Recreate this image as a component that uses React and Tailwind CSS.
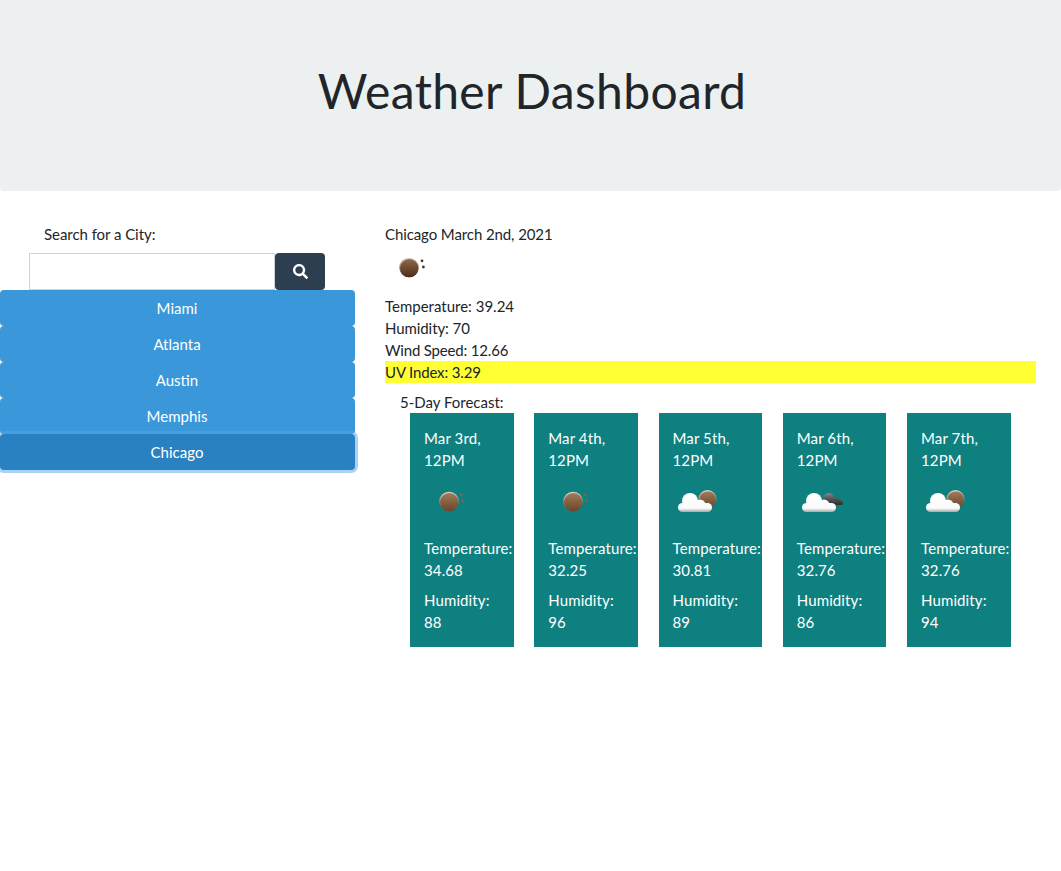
import React from 'react';
import { FaSearch } from 'react-icons/fa';

const cities = ['Miami', 'Atlanta', 'Austin', 'Memphis'];

const forecast = [
  { date: 'Mar 3rd,', temp: '34.68', humidity: '88', icon: 'ball' },
  { date: 'Mar 4th,', temp: '32.25', humidity: '96', icon: 'ball' },
  { date: 'Mar 5th,', temp: '30.81', humidity: '89', icon: 'cloudSun' },
  { date: 'Mar 6th,', temp: '32.76', humidity: '86', icon: 'cloudNight' },
  { date: 'Mar 7th,', temp: '32.76', humidity: '94', icon: 'cloudSun' },
];

// Shared gradients for the little weather drawings
const Defs = () => (
  <svg width="0" height="0" className="absolute">
    <defs>
      <linearGradient id="sun" x1="0" y1="0" x2="0" y2="1">
        <stop offset="0" stopColor="#a07a5c" />
        <stop offset="0.5" stopColor="#85603f" />
        <stop offset="1" stopColor="#694630" />
      </linearGradient>
      <linearGradient id="sunDark" x1="0" y1="0" x2="0" y2="1">
        <stop offset="0" stopColor="#8f6a4e" />
        <stop offset="0.5" stopColor="#6b4a30" />
        <stop offset="1" stopColor="#4a2e1c" />
      </linearGradient>
      <linearGradient id="rim" x1="0" y1="0" x2="0" y2="1">
        <stop offset="0" stopColor="#e2d3c4" />
        <stop offset="0.5" stopColor="#a58a74" />
        <stop offset="1" stopColor="#694630" />
      </linearGradient>
      <linearGradient id="cloud" gradientUnits="userSpaceOnUse" x1="0" y1="14" x2="0" y2="33">
        <stop offset="0" stopColor="#ffffff" />
        <stop offset="0.8" stopColor="#fbfbfb" />
        <stop offset="1" stopColor="#a8a8a8" />
      </linearGradient>
      <linearGradient id="night" x1="0" y1="0" x2="0" y2="1">
        <stop offset="0" stopColor="#8a8a8a" />
        <stop offset="0.4" stopColor="#5c5c5c" />
        <stop offset="1" stopColor="#2c2c2c" />
      </linearGradient>
    </defs>
  </svg>
);

const Cloud = () => (
  <g fill="url(#cloud)">
    <circle cx="17" cy="22" r="8" />
    <circle cx="27" cy="26" r="5.500" />
    <rect x="5" y="24" width="34" height="9" rx="4.500" />
  </g>
);

const Sun = ({ cx, cy, r, fill = 'url(#sun)' }) => (
  <>
    <circle cx={cx} cy={cy} r={r} fill="url(#rim)" />
    <circle cx={cx + 0.3} cy={cy + 0.7} r={r - 0.7} fill={fill} />
  </>
);

const WeatherIcon = ({ type, dark }) => (
  <svg width="50" height="50" viewBox="0 0 50 50" className="block">
    {type === 'ball' && (
      <>
        <Sun cx={dark ? 24 : 25} cy={22.5} r={9.8} fill={dark ? 'url(#sunDark)' : 'url(#sun)'} />
        <circle cx="37" cy="15.800" r="1.400" fill={dark ? '#4a3426' : '#8a5f45'} />
        <circle cx="38.400" cy="22" r="1.400" fill={dark ? '#4a3426' : '#8a5f45'} />
      </>
    )}
    {type === 'cloudSun' && (
      <>
        <Sun cx={34.5} cy={20} r={9} />
        <Cloud />
      </>
    )}
    {type === 'cloudNight' && (
      <>
        <path
          d="M26 20C26 16 29 14 32 14C34.500 14 36 16 37 18.500C41 19 46 21.500 46 24C46 25.500 45 26 43 26L31 26C28 25 26 23 26 20Z"
          fill="url(#night)"
        />
        <Cloud />
      </>
    )}
  </svg>
);

const App = () => {
  return (
    <div className="min-h-[871px] bg-white text-[15px] leading-[22px] text-[#212529] font-['Lato','Open_Sans',sans-serif]">
      <Defs />
      <header className="h-[191px] bg-[#ecf0f1] rounded-b-[4px] flex items-center justify-center pb-[10px] pl-[3px]">
        <h1 className="text-[48px] leading-[58px] font-normal tracking-[0.35px]">Weather Dashboard</h1>
      </header>

      <div className="flex">
        {/* Search column */}
        <aside className="w-[355px] shrink-0 pt-8">
          <label className="block pl-11 mb-[8px] tracking-[-0.05px]">Search for a City:</label>
          <div className="flex pl-[29px]">
            <input
              type="text"
              className="w-[246px] h-[37px] bg-white border border-[#ced4da] outline-none"
            />
            <button className="w-[50px] h-[37px] bg-[#2c3e50] rounded-[4px] text-white flex items-center justify-center">
              <FaSearch size={15} />
            </button>
          </div>
          <div className="flex flex-col">
            {cities.map((city) => (
              <button key={city} className="h-9 bg-[#3a97d9] rounded-[4px] text-white text-center pr-px">
                {city}
              </button>
            ))}
            <button className="relative h-9 bg-[#2a81c2] rounded-[4px] text-white text-center pr-px shadow-[0_0_0_3px_rgba(82,167,231,0.5)]">
              Chicago
            </button>
          </div>
        </aside>

        {/* Current weather and forecast */}
        <main className="w-[651px] ml-[30px] pt-8">
          <p className="tracking-[-0.1px]">Chicago March 2nd, 2021</p>
          <WeatherIcon type="ball" dark />
          <p>Temperature: 39.24</p>
          <p className="tracking-[-0.08px]">Humidity: 70</p>
          <p className="tracking-[-0.18px]">Wind Speed: 12.66</p>
          <p className="bg-[#ffff33] tracking-[-0.15px]">UV Index: 3.29</p>
          <p className="pl-[15px] mt-2">5-Day Forecast:</p>
          <div className="grid grid-cols-[repeat(5,124.25px)] ml-[15px]">
            {forecast.map((day) => (
              <div
                key={day.date}
                className="ml-[10px] w-[103.7px] bg-[#0f8080] text-white py-[14px] pl-[14px] whitespace-nowrap tracking-[0.12px]"
              >
                <p>{day.date}</p>
                <p>12PM</p>
                <div className="mt-2 mb-2">
                  <WeatherIcon type={day.icon} />
                </div>
                <p>Temperature:</p>
                <p className="mb-2">{day.temp}</p>
                <p>Humidity:</p>
                <p>{day.humidity}</p>
              </div>
            ))}
          </div>
        </main>
      </div>
    </div>
  );
};

export default App;
